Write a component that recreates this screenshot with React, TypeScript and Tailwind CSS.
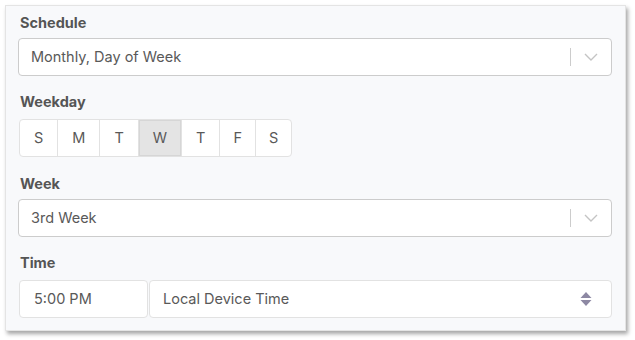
import React from "react";

const days = ["S", "M", "T", "W", "T", "F", "S"];
const pads = ["px-[14px]", "px-[14px]", "px-[14px]", "px-[14px]", "px-[14px]", "px-[13px]", "px-[13px]"];

function Chevron() {
  return (
    <svg width="14" height="8" viewBox="0 0 14 8" fill="none">
      <path d="M1 1l6 6 6-6" stroke="#c4c4c4" strokeWidth="1.4" />
    </svg>
  );
}

function Select({ value }: { value: string }) {
  return (
    <div className="flex h-[38px] items-center rounded-[4px] border border-[#cccccc] bg-white">
      <div className="flex-1 pl-[12px] text-[14.5px] text-[#595959]">{value}</div>
      <div className="h-[18px] w-px bg-[#cccccc]" />
      <div className="flex w-[40px] items-center justify-center">
        <Chevron />
      </div>
    </div>
  );
}

function Label({ children, className = "" }: { children: React.ReactNode; className?: string }) {
  return (
    <div className={"h-[20px] text-[14.5px] font-bold leading-[20px] text-[#555555] " + className}>
      {children}
    </div>
  );
}

export default function App() {
  return (
    <div className="h-[340px] w-[635px] bg-white pl-[5px] pt-[5px]" style={{ fontFamily: "Inter, 'Noto Sans', sans-serif" }}>
      <div className="flex h-[326px] w-[621px] flex-col border border-[#e4e4e4] bg-[#f8f9fb] pl-[12px] pr-[13px] pt-[7px] shadow-[2px_3px_4px_rgba(0,0,0,0.35)]">
        <Label className="pl-[2px]">Schedule</Label>
        <div className="mt-[5px]">
          <Select value="Monthly, Day of Week" />
        </div>
        <Label className="mt-[16px] pl-[2px]">Weekday</Label>
        <div className="ml-[1px] mt-[7px] flex h-[38px] self-start overflow-hidden rounded-[4px] border border-[#e2e2e2] bg-white">
          {days.map((d, i) => (
            <div
              key={i}
              className={
                "flex items-center justify-center text-[14.5px] text-[#595959] " +
                pads[i] +
                " " +
                (i > 0 ? "border-l border-[#e2e2e2] " : "") +
                (i === 3 ? "bg-[#e4e4e4] shadow-[inset_0_0_0_1px_#d6d6d6]" : "")
              }
            >
              {d}
            </div>
          ))}
        </div>
        <Label className="mt-[17px] pl-[2px]">Week</Label>
        <div className="mt-[5px]">
          <Select value="3rd Week" />
        </div>
        <Label className="mt-[16px] pl-[2px]">Time</Label>
        <div className="mt-[7px] flex h-[38px] gap-[1px] pl-[1px]">
          <div className="flex w-[129px] items-center rounded-[4px] border border-[#e2e2e2] bg-white pl-[14px] text-[14.5px] text-[#595959]">
            5:00 PM
          </div>
          <div className="flex flex-1 items-center rounded-[4px] border border-[#e2e2e2] bg-white pl-[13px] pr-[19px] text-[14.5px] text-[#595959]">
            <div className="flex-1">Local Device Time</div>
            <svg width="12" height="16" viewBox="0 0 12 16">
              <path d="M6 1L11.5 7H0.5Z" fill="#8d88a3" />
              <path d="M6 15L11.5 9H0.5Z" fill="#8d88a3" />
            </svg>
          </div>
        </div>
      </div>
    </div>
  );
}
